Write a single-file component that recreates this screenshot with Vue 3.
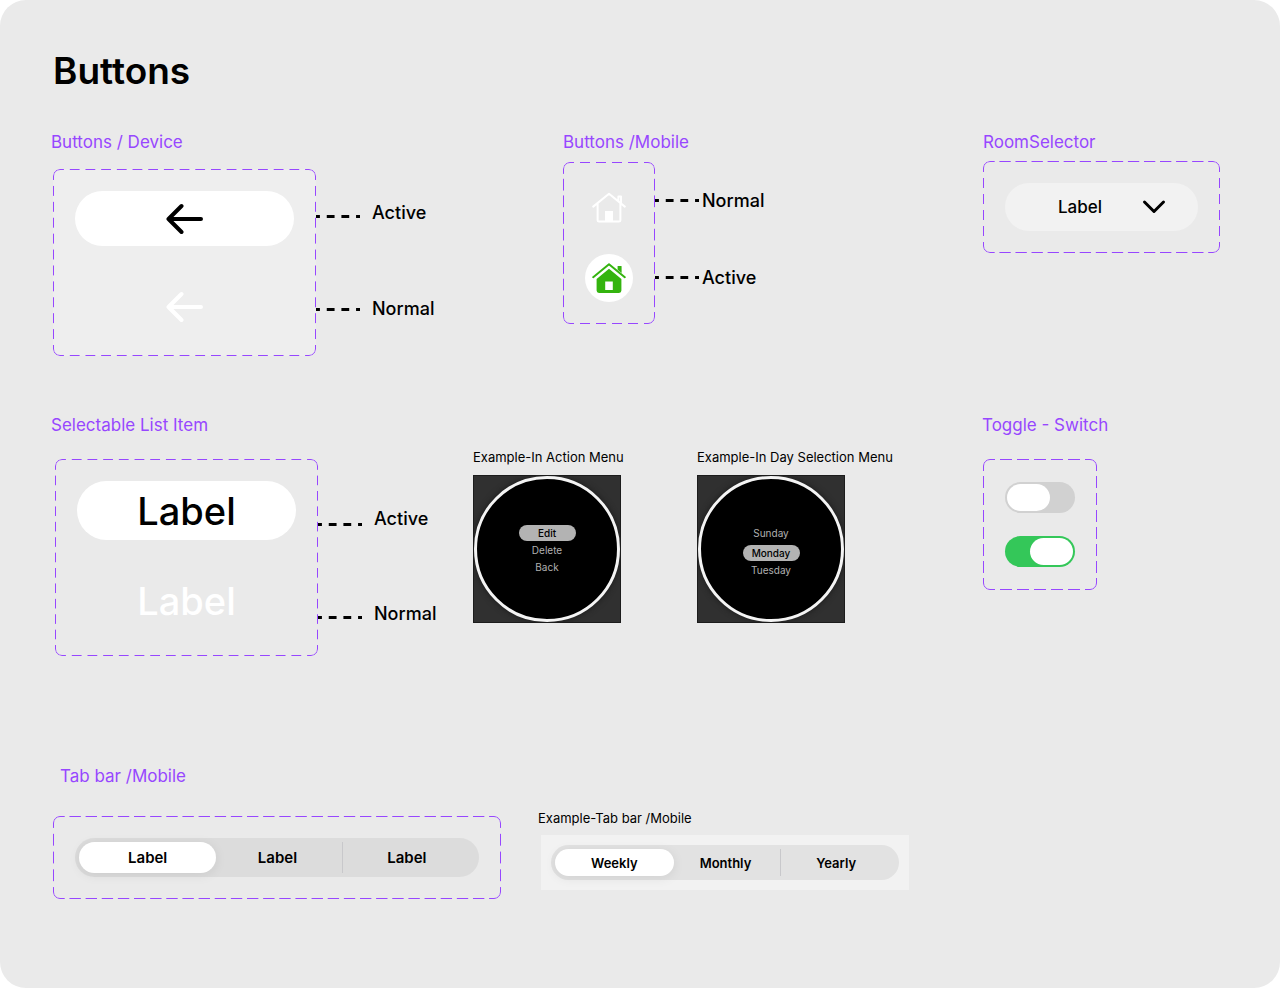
<script setup>
import { ref } from 'vue'

const room = ref('Label')
const toggleOff = ref(false)
const toggleOn = ref(true)
const activeTab = ref(0)
const activePeriod = ref(0)

const tabs = ['Label', 'Label', 'Label']
const periods = ['Weekly', 'Monthly', 'Yearly']
const actions = ['Edit', 'Delete', 'Back']
const days = ['Sunday', 'Monday', 'Tuesday']
</script>

<template>
  <main class="board">
    <h1 class="title">Buttons</h1>

    <div class="row row-top">
      <section>
        <h2 class="label">Buttons / Device</h2>
        <div class="spec device">
          <div class="frame frame-device">
            <button class="pill pill-arrow pill-active" type="button" aria-label="Back, active">
              <svg width="38" height="32" viewBox="0 0 38 32" class="arrow">
                <path d="M2.5 16H35M15.5 3L2.5 16L15.5 29" />
              </svg>
            </button>
            <button class="pill pill-arrow pill-normal" type="button" aria-label="Back, normal">
              <svg width="38" height="32" viewBox="0 0 38 32" class="arrow">
                <path d="M2.5 16H35M15.5 3L2.5 16L15.5 29" />
              </svg>
            </button>
          </div>
          <div class="lines"><i class="line"></i><i class="line"></i></div>
          <div class="states"><span>Active</span><span>Normal</span></div>
        </div>
      </section>

      <section>
        <h2 class="label">Buttons /Mobile</h2>
        <div class="spec mobile">
          <div class="frame frame-mobile">
            <button class="round" type="button" aria-label="Home, normal">
              <svg width="34" height="32" viewBox="0 0 34 32" class="home">
                <path d="M1.2 14.6L17 1.8L32.8 14.6M26.4 9V4.5H29V11.4M5.6 11.5V28.2Q5.6 29.6 7 29.6H27Q28.4 29.6 28.4 28.2V11.5" />
                <path class="solid" d="M13 19H21V30H13Z" />
              </svg>
            </button>
            <button class="round round-active" type="button" aria-label="Home, active">
              <svg width="34" height="32" viewBox="0 0 34 32" class="home home-active">
                <path d="M1.2 15.2L17 2.2L32.8 15.2" />
                <path class="solid" d="M25.6 4.6Q25.6 4 26.2 4H29Q29.6 4 29.6 4.6V11L25.6 7.8Z" />
                <path class="solid" fill-rule="evenodd" d="M17 6.8L29.4 17V28.6Q29.4 31 27 31H7Q4.6 31 4.6 28.6V17ZM13.2 19.4V28H20.8V19.4Z" />
              </svg>
            </button>
          </div>
          <div class="lines"><i class="line"></i><i class="line"></i></div>
          <div class="states"><span>Normal</span><span>Active</span></div>
        </div>
      </section>

      <section>
        <h2 class="label" id="room-label">RoomSelector</h2>
        <div class="spec room">
          <div class="frame">
            <div class="selector">
              <select v-model="room" aria-labelledby="room-label">
                <option>Label</option>
              </select>
              <svg class="chevron" width="24" height="16" viewBox="0 0 24 16">
                <path d="M2.5 3L12 12.5L21.5 3" />
              </svg>
            </div>
          </div>
        </div>
      </section>
    </div>

    <div class="row row-middle">
      <section>
        <h2 class="label">Selectable List Item</h2>
        <div class="spec list">
          <div class="frame frame-list">
            <button class="pill pill-text pill-active" type="button">Label</button>
            <button class="pill pill-text pill-normal" type="button">Label</button>
          </div>
          <div class="lines"><i class="line"></i><i class="line"></i></div>
          <div class="states"><span>Active</span><span>Normal</span></div>
        </div>
      </section>

      <figure class="example">
        <figcaption class="caption">Example-In Action Menu</figcaption>
        <div class="watch">
          <div class="dial">
            <button
              v-for="(item, i) in actions"
              :key="item"
              type="button"
              class="option"
              :class="{ chosen: i === 0 }"
            >{{ item }}</button>
          </div>
        </div>
      </figure>

      <figure class="example">
        <figcaption class="caption">Example-In Day Selection Menu</figcaption>
        <div class="watch">
          <div class="dial dial-days">
            <button
              v-for="(item, i) in days"
              :key="item"
              type="button"
              class="option"
              :class="{ chosen: i === 1 }"
            >{{ item }}</button>
          </div>
        </div>
      </figure>

      <section>
        <h2 class="label">Toggle - Switch</h2>
        <div class="spec toggles">
          <div class="frame frame-toggles">
            <input v-model="toggleOff" class="switch" type="checkbox" role="switch" aria-label="Switch, off" />
            <input v-model="toggleOn" class="switch" type="checkbox" role="switch" aria-label="Switch, on" />
          </div>
        </div>
      </section>
    </div>

    <div class="row row-bottom">
      <section>
        <h2 class="label label-tabs">Tab bar /Mobile</h2>
        <div class="spec tabs">
          <div class="frame frame-tabs">
            <div class="tabbar" role="tablist" aria-label="Tab bar">
              <button
                v-for="(tab, i) in tabs"
                :key="i"
                type="button"
                role="tab"
                class="tab"
                :class="{ selected: activeTab === i }"
                :aria-selected="activeTab === i"
                @click="activeTab = i"
              ><span>{{ tab }}</span></button>
            </div>
          </div>
        </div>
      </section>

      <figure class="example example-tabs">
        <figcaption class="caption">Example-Tab bar /Mobile</figcaption>
        <div class="sample">
          <div class="tabbar tabbar-small" role="tablist" aria-label="Period">
            <button
              v-for="(period, i) in periods"
              :key="period"
              type="button"
              role="tab"
              class="tab"
              :class="{ selected: activePeriod === i }"
              :aria-selected="activePeriod === i"
              @click="activePeriod = i"
            ><span>{{ period }}</span></button>
          </div>
        </div>
      </figure>
    </div>
  </main>
</template>

<style>
body {
  margin: 0;
  background: #fff;
}
</style>

<style scoped>
* {
  box-sizing: border-box;
}

.board {
  min-height: 100vh;
  padding: 48px 0 88px 51px;
  border-radius: 26px;
  background: #eaeaea;
  color: #000;
  font-family: Inter, "Liberation Sans", sans-serif;
}

button,
select {
  padding: 0;
  border: 0;
  background: none;
  color: inherit;
  font: inherit;
}

figure {
  margin: 0;
}

.title {
  margin: 0 0 37px 2px;
  font-size: 37px;
  line-height: 46px;
  font-weight: 600;
}

.row {
  display: grid;
  align-items: start;
}

.row-top {
  grid-template-columns: 512fr 420fr 297fr;
}

.row-middle {
  grid-template-columns: 422fr 224fr 285fr 298fr;
  margin-top: 58px;
}

.row-bottom {
  grid-template-columns: 487fr 742fr;
  margin-top: 109px;
}

.label {
  margin: 0;
  color: #9747ff;
  font-size: 17px;
  line-height: 22px;
  font-weight: 400;
}

.label-tabs {
  padding-left: 9px;
}

.spec {
  display: flex;
  align-items: flex-start;
}

/* Dashed component outline: a rounded border cut into dashes that always
   fit a whole number of times along each side. */
.frame {
  position: relative;
  display: flex;
  flex-direction: column;
  padding: 22px;
  border-radius: 8px;
}

.frame::before {
  content: "";
  position: absolute;
  inset: 0;
  padding: 5px;
  border: 1px solid #9747ff;
  border-radius: 7px;
  pointer-events: none;
  --across: linear-gradient(90deg, #000 34%, transparent 34% 66%, #000 66%);
  --down: linear-gradient(#000 34%, transparent 34% 66%, #000 66%);
  mask-image: var(--across), var(--across), var(--down), var(--down);
  mask-size: 16px 8px, 16px 8px, 8px 16px, 8px 16px;
  mask-repeat: round no-repeat, round no-repeat, no-repeat round, no-repeat round;
  mask-position: 0 -6px, 0 calc(100% + 6px), -6px 0, calc(100% + 6px) 0;
  mask-origin: content-box;
  mask-clip: border-box;
}

.lines,
.states {
  display: flex;
  flex-direction: column;
}

.line {
  width: 44px;
  height: 3px;
  background: linear-gradient(90deg, #000 25%, transparent 25% 75%, #000 75%) 0 0 / 33.33% 100%;
}

.states {
  font-size: 18px;
  line-height: 20px;
  font-weight: 500;
}

.pill {
  display: flex;
  align-items: center;
  justify-content: center;
  width: 219px;
  border-radius: 30px;
}

.pill-arrow {
  height: 55px;
}

.pill-text {
  height: 59px;
  font-size: 38px;
  line-height: 48px;
  font-weight: 500;
}

.pill-active {
  background: #fff;
}

.pill-normal {
  color: #fff;
}

.arrow {
  fill: none;
  stroke: currentColor;
  stroke-width: 4;
  stroke-linecap: round;
  stroke-linejoin: round;
}

.device {
  margin: 16px 0 0 2px;
}

.frame-device {
  gap: 33px;
  background: #eee;
}

.device .lines {
  gap: 90px;
  padding-top: 46px;
}

.device .states {
  gap: 76px;
  padding: 34px 0 0 12px;
}

.mobile {
  margin-top: 9px;
}

.frame-mobile {
  gap: 22px;
}

.mobile .lines {
  gap: 74px;
  padding-top: 37px;
}

.mobile .states {
  gap: 57px;
  padding: 29px 0 0 3px;
}

.round {
  display: flex;
  align-items: center;
  justify-content: center;
  width: 48px;
  height: 48px;
  border-radius: 50%;
  color: #fff;
}

.round-active {
  background: #fff;
  color: #34b40f;
}

.home {
  fill: none;
  stroke: currentColor;
  stroke-width: 2;
  stroke-linecap: round;
  stroke-linejoin: round;
}

.home .solid {
  fill: currentColor;
  stroke: none;
}

.room {
  margin-top: 8px;
}

.selector {
  display: grid;
  align-items: center;
  width: 193px;
  height: 48px;
  border-radius: 24px;
  background: #f2f2f2;
}

.selector select {
  grid-area: 1 / 1;
  width: 100%;
  height: 100%;
  padding-left: 53px;
  border-radius: 24px;
  appearance: none;
  font-size: 17px;
  font-weight: 500;
}

.chevron {
  grid-area: 1 / 1;
  justify-self: end;
  margin-right: 32px;
  fill: none;
  stroke: #000;
  stroke-width: 3;
  stroke-linecap: round;
  stroke-linejoin: round;
  pointer-events: none;
}

.list {
  margin: 23px 0 0 4px;
}

.frame-list {
  gap: 31px;
  padding-bottom: 26px;
}

.list .lines {
  gap: 90px;
  padding-top: 64px;
}

.list .states {
  gap: 75px;
  padding: 50px 0 0 12px;
}

.example {
  display: flex;
  flex-direction: column;
  align-items: flex-start;
  gap: 10px;
  padding-top: 35px;
}

.caption {
  font-size: 13px;
  line-height: 16px;
}

.watch {
  width: 148px;
  height: 148px;
  overflow: hidden;
  border: 1px solid #1c1c1c;
  background: #303030;
}

.dial {
  display: flex;
  flex-direction: column;
  align-items: center;
  justify-content: center;
  gap: 1px;
  height: 100%;
  padding-top: 2px;
  border: 3px solid #f4f4f4;
  border-radius: 50%;
  background: #000;
  box-shadow: 0 0 6px #1a1a1a;
}

.dial-days {
  padding-top: 4px;
}

.option {
  width: 57px;
  height: 16px;
  border-radius: 8px;
  color: #b0b0b0;
  font-size: 10px;
  line-height: 16px;
}

.option.chosen {
  background: #b3b3b3;
  color: #000;
  font-weight: 500;
}

.dial-days .chosen {
  margin-top: 3px;
}

.toggles {
  margin: 23px 0 0 1px;
}

.frame-toggles {
  gap: 23px;
  padding-block: 23px;
}

.switch {
  display: flex;
  width: 70px;
  height: 31px;
  margin: 0;
  padding: 2px;
  border-radius: 16px;
  appearance: none;
  background: #d1d1d1;
}

.switch::before {
  content: "";
  width: 43px;
  border-radius: 14px;
  background: #fff;
}

.switch:checked {
  justify-content: flex-end;
  background: #34c759;
}

.tabs {
  margin: 29px 0 0 2px;
}

.tabbar {
  display: grid;
  grid-template-columns: repeat(3, 1fr);
  width: 404px;
  height: 39px;
  padding: 4px 8px;
  border-radius: 20px;
  background: #dcdcdc;
  font-size: 15px;
  font-weight: 600;
}

.tab {
  display: flex;
  align-items: center;
  justify-content: center;
}

.tab + .tab:not(.selected) {
  border-left: 1px solid #c8c8cb;
}

.tab.selected + .tab {
  border-left-color: transparent;
}

.tab.selected {
  margin-inline: -4px;
  border-radius: 16px;
  background: #fff;
  box-shadow: 0 2px 12px rgba(0, 0, 0, 0.08);
}

.example-tabs {
  gap: 9px;
  padding-top: 45px;
}

.sample {
  margin-left: 3px;
  padding: 10px;
  background: #f2f2f2;
}

.tabbar-small {
  width: 348px;
  height: 35px;
  background: #e2e2e2;
  font-size: 13px;
}
</style>
